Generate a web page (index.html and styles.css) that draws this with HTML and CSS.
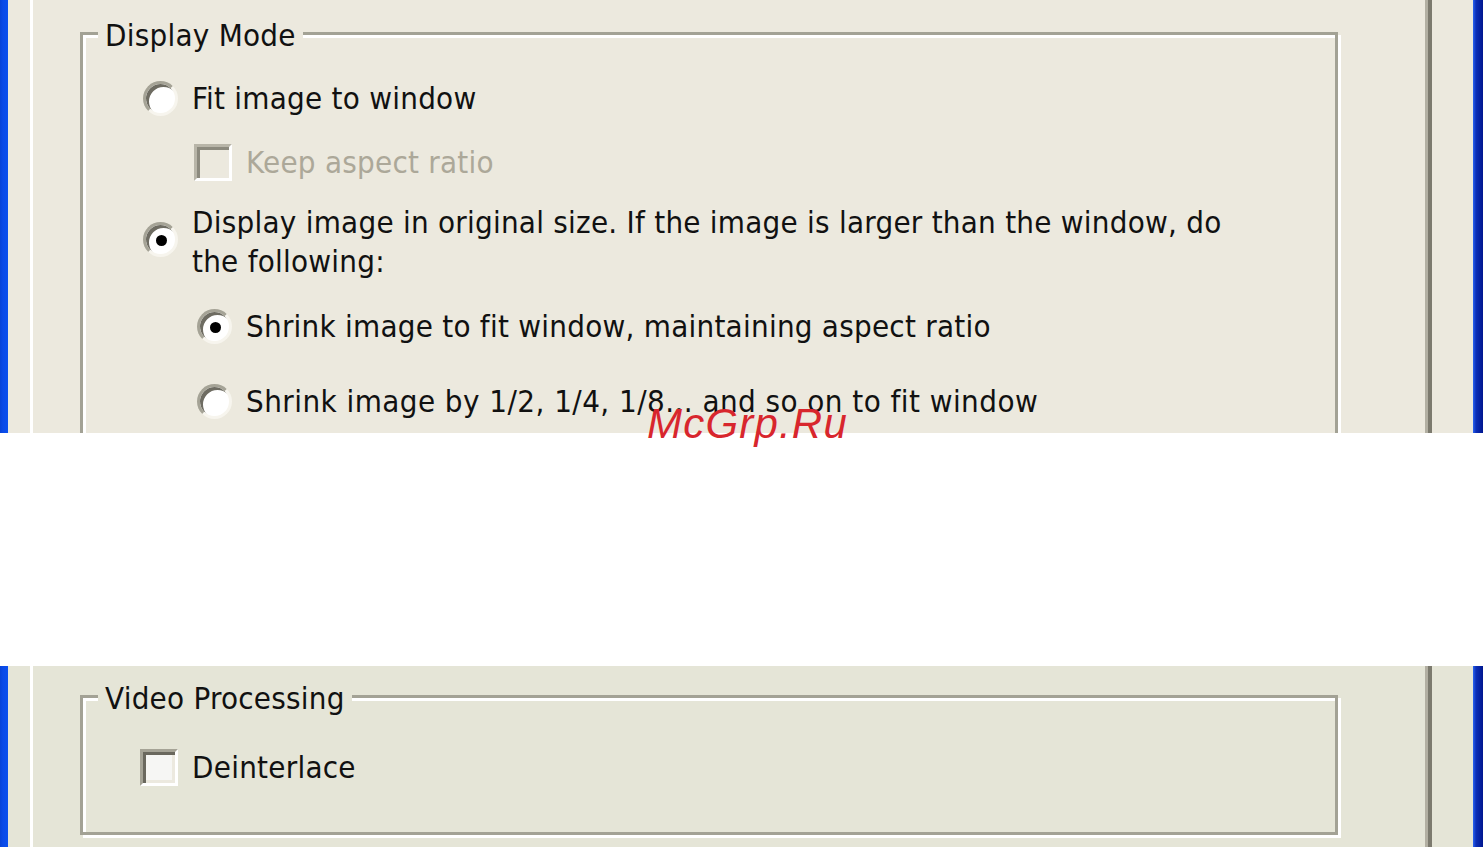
FILE: index.html
```html
<!DOCTYPE html>
<html>
<head>
<meta charset="utf-8">
<title>Display Mode</title>
<link rel="stylesheet" href="styles.css">
</head>
<body>
<div class="shot">
  <section class="panel panel-top">
    <div class="frame frame-l"></div>
    <div class="sheet">
      <div class="page">
        <div class="group group-display">
          <div class="group-title">Display Mode</div>
          <div class="opt opt-fit"><span class="radio"></span><span class="label">Fit image to window</span></div>
          <div class="opt opt-sub opt-keep"><span class="check disabled"></span><span class="label disabled-text">Keep aspect ratio</span></div>
          <div class="opt opt-orig"><span class="radio checked raise"></span><span class="label label-wrap">Display image in original size. If the image is larger than the window, do the following:</span></div>
          <div class="opt opt-sub opt-shrink"><span class="radio checked"></span><span class="label">Shrink image to fit window, maintaining aspect ratio</span></div>
          <div class="opt opt-sub opt-half"><span class="radio"></span><span class="label label-nums">Shrink image by 1/2, 1/4, 1/8... and so on to fit window</span></div>
        </div>
      </div>
    </div>
    <div class="frame frame-r"></div>
  </section>
  <div class="band"></div>
  <section class="panel panel-bottom">
    <div class="frame frame-l"></div>
    <div class="sheet">
      <div class="page">
        <div class="group group-video">
          <div class="group-title">Video Processing</div>
          <div class="opt opt-deint"><span class="check"></span><span class="label">Deinterlace</span></div>
        </div>
      </div>
    </div>
    <div class="frame frame-r"></div>
  </section>
  <div class="watermark">McGrp.Ru</div>
</div>
</body>
</html>
```

FILE: styles.css
```css
html, body {
  margin: 0;
  padding: 0;
  background: #ffffff;
}

.shot {
  position: relative;
  width: 1483px;
  height: 847px;
  overflow: hidden;
  font-family: "DejaVu Sans Condensed", "DejaVu Sans", sans-serif;
  font-size: 31px;
  line-height: 39px;
  letter-spacing: 0.25px;
  color: #111111;
}

.panel {
  display: flex;
  overflow: hidden;
}

.panel-top {
  height: 433px;
  background: #ECE9DE;
}

.panel-bottom {
  height: 181px;
  background: #E5E5D7;
}

.band {
  height: 233px;
  background: #ffffff;
}

.frame-l {
  width: 8px;
  flex: none;
  background: linear-gradient(to right, #0843d6 0, #0a4ae8 3px, #0b50ee 8px);
}

.frame-r {
  width: 10px;
  flex: none;
  background: linear-gradient(to right, #2a64f0 0, #0c2fb8 3px, #00168e 10px);
}

.sheet {
  flex: 1;
  display: flex;
  padding: 0 41px 0 22px;
}

.page {
  flex: 1;
  border-left: 3px solid #ffffff;
  border-right: 4px solid #7c7a6e;
  box-shadow: inset -3px 0 0 #b2afa2;
  padding: 32px 90px 0 47px;
}

.panel-bottom .page {
  padding-top: 29px;
}

.group {
  box-sizing: border-box;
  border: 3px solid #A3A295;
  box-shadow: inset 3px 3px 0 #ffffff, 3px 3px 0 #ffffff;
  display: flex;
  flex-direction: column;
  align-items: flex-start;
}

.group-display {
  height: 520px;
}

.group-video {
  height: 140px;
}

.group-title {
  margin: -19px 0 0 15px;
  padding: 0 7px;
  background: #ECE9DE;
  white-space: nowrap;
}

.group-video .group-title {
  background: #E5E5D7;
}

.opt {
  display: grid;
  grid-template-columns: 38px auto;
  column-gap: 14px;
  align-items: center;
  padding-left: 57px;
}

.opt-sub {
  padding-left: 111px;
}

.opt-fit { margin-top: 24px; }
.opt-keep { margin-top: 25px; }
.opt-orig { margin-top: 21px; }
.opt-shrink { margin-top: 26px; }
.opt-half { margin-top: 36px; }
.opt-deint { margin-top: 30px; }

.label {
  white-space: nowrap;
}

.label-wrap {
  white-space: normal;
  width: 1060px;
}

.label-nums {
  letter-spacing: 0.45px;
}

.disabled-text {
  color: #ACA899;
}

.radio {
  justify-self: end;
  box-sizing: border-box;
  width: 35px;
  height: 35px;
  border-radius: 50%;
  border: 3px solid;
  border-color: #a5a396 #f7f5ee #f7f5ee #a5a396;
  box-shadow: inset 3px 3px 0 #6e6c62;
  background: #ffffff;
  display: flex;
  align-items: center;
  justify-content: center;
}

.radio.checked::after {
  content: "";
  width: 11px;
  height: 11px;
  border-radius: 50%;
  background: #000000;
  margin: 2px 0 0 2px;
}

.raise {
  margin-bottom: 6px;
}

.check {
  box-sizing: border-box;
  width: 38px;
  height: 37px;
  border: 3px solid;
  border-color: #a5a396 #ffffff #ffffff #a5a396;
  box-shadow: inset 3px 3px 0 #6a685e, inset -3px -3px 0 #ece9df;
  background: #f6f6f4;
}

.check.disabled {
  background: #ECE9DE;
  border-color: #b8b5a8 #ffffff #ffffff #b8b5a8;
  box-shadow: inset 3px 3px 0 #8c8a7e, inset -3px -3px 0 #ece9df;
}

.watermark {
  position: absolute;
  left: 647px;
  top: 403px;
  font-family: "Liberation Sans", Arial, sans-serif;
  font-style: italic;
  font-size: 42px;
  line-height: 42px;
  color: #d8262d;
  letter-spacing: 1.2px;
}
```
